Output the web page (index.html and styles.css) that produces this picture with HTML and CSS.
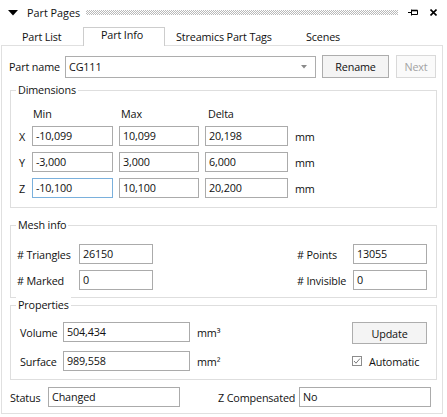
FILE: index.html
```html
<!DOCTYPE html>
<html>
<head>
<meta charset="utf-8">
<link rel="stylesheet" href="styles.css">
</head>
<body>
<div class="dock">
  <div class="titlebar">
    <svg class="tri" width="10" height="6" viewBox="0 0 10 6"><polygon points="0,0 10,0 5,5.5" fill="#000"/></svg>
    <span class="title">Part Pages</span>
    <span class="dots"></span>
    <svg class="pin" width="10" height="7" viewBox="0 0 10 7"><path d="M0 3.5H3.5M3.5 0.5V6.5M4 1.5H9.5V5.5H4" fill="none" stroke="#000" stroke-width="1"/><path d="M4 1.5H9.5" stroke="#000" stroke-width="1.6"/></svg>
    <svg class="close" width="7" height="7" viewBox="0 0 7 7"><path d="M0.5 0.5L6.5 6.5M6.5 0.5L0.5 6.5" stroke="#000" stroke-width="1.6"/></svg>
  </div>
  <div class="tabs">
    <div class="tab t1">Part List</div>
    <div class="tab sel">Part Info</div>
    <div class="tab t3">Streamics Part Tags</div>
    <div class="tab t4">Scenes</div>
  </div>
  <div class="pane">
    <div class="namerow">
      <span class="namelbl">Part name</span>
      <div class="combo"><span>CG111</span><svg class="arrow" width="6" height="4" viewBox="0 0 6 4"><polygon points="0,0 6,0 3,3.5" fill="#8a8a8a"/></svg></div>
      <div class="btn rename">Rename</div>
      <div class="btn next">Next</div>
    </div>

    <div class="group dims">
      <span class="gtitle">Dimensions</span>
      <div class="drow head">
        <span class="axis"></span>
        <span class="cmin hd">Min</span>
        <span class="cmax hd">Max</span>
        <span class="cdel hd">Delta</span>
      </div>
      <div class="drow">
        <span class="axis">X</span>
        <div class="edit cmin">-10,099</div>
        <div class="edit cmax">10,099</div>
        <div class="edit cdel">20,198</div>
        <span class="unit">mm</span>
      </div>
      <div class="drow">
        <span class="axis">Y</span>
        <div class="edit cmin">-3,000</div>
        <div class="edit cmax">3,000</div>
        <div class="edit cdel">6,000</div>
        <span class="unit">mm</span>
      </div>
      <div class="drow">
        <span class="axis">Z</span>
        <div class="edit cmin focus">-10,100</div>
        <div class="edit cmax">10,100</div>
        <div class="edit cdel">20,200</div>
        <span class="unit">mm</span>
      </div>
    </div>

    <div class="group mesh">
      <span class="gtitle">Mesh info</span>
      <div class="mrow">
        <div class="mcell"><span class="mlbl">#&nbsp;Triangles</span><div class="edit mval">26150</div></div>
        <div class="mcell"><span class="mlbl r">#&nbsp;Points</span><div class="edit mval">13055</div></div>
      </div>
      <div class="mrow">
        <div class="mcell"><span class="mlbl">#&nbsp;Marked</span><div class="edit mval">0</div></div>
        <div class="mcell"><span class="mlbl r">#&nbsp;Invisible</span><div class="edit mval">0</div></div>
      </div>
    </div>

    <div class="group props">
      <span class="gtitle">Properties</span>
      <div class="pbody">
        <div class="pleft">
          <div class="prow"><span class="plbl">Volume</span><div class="edit pval">504,434</div><span class="punit">mm³</span></div>
          <div class="prow"><span class="plbl">Surface</span><div class="edit pval">989,558</div><span class="punit">mm²</span></div>
        </div>
        <div class="pright">
          <div class="btn update">Update</div>
          <div class="check">
            <svg class="box" width="10" height="10" viewBox="0 0 10 10"><rect x="0.5" y="0.5" width="9" height="9" fill="#fff" stroke="#8c8c8c"/><path d="M2 5L4 7.2L8 2.5" fill="none" stroke="#7a7a7a" stroke-width="1"/></svg>
            <span>Automatic</span>
          </div>
        </div>
      </div>
    </div>

    <div class="statusrow">
      <span class="slbl">Status</span>
      <div class="edit sval">Changed</div>
      <span class="zlbl">Z Compensated</span>
      <div class="edit sval">No</div>
    </div>
  </div>
</div>
</body>
</html>
```

FILE: styles.css
```css
html, body {
  margin: 0;
  padding: 0;
  background: #fff;
}
body {
  width: 447px;
  height: 417px;
  overflow: hidden;
  font-family: "Open Sans", "Noto Sans", sans-serif;
  font-size: 10.8px;
  letter-spacing: -0.15px;
  color: #111;
}
.dock {
  width: 447px;
}
.titlebar {
  display: flex;
  align-items: center;
  height: 25px;
  padding-left: 8px;
  padding-right: 10px;
  box-sizing: border-box;
}
.tri {
  flex: none;
  margin-right: 9px;
  margin-top: 1px;
}
.title {
  line-height: 16px;
  white-space: nowrap;
  letter-spacing: 0;
}
.dots {
  flex: 1;
  height: 5px;
  margin-left: 6px;
  margin-right: 10px;
  background: repeating-conic-gradient(#b9b9b9 0 25%, transparent 0 50%) 0 0 / 2px 2px;
}
.pin {
  flex: none;
  margin-right: 12px;
}
.close {
  flex: none;
}

.tabs {
  display: flex;
  align-items: flex-end;
  height: 18px;
  margin-top: 2px;
  padding-left: 3px;
}
.tab {
  height: 16px;
  line-height: 16px;
  white-space: nowrap;
  box-sizing: border-box;
}
.t1 {
  width: 80px;
  padding-left: 19px;
}
.sel {
  position: relative;
  z-index: 1;
  width: 82px;
  height: 19px;
  margin-bottom: -1px;
  padding-left: 17px;
  line-height: 14px;
  background: #fff;
  border: 1px solid #cdcdcd;
  border-bottom: 0;
}
.t3 {
  width: 124px;
  padding-left: 11px;
}
.t4 {
  padding-left: 17px;
}

.pane {
  margin: 0 4px 0 1px;
  border: 1px solid #e0e0e0;
  padding: 9px 5px 6px 7px;
}

.namerow {
  display: flex;
  align-items: center;
  height: 23px;
}
.namelbl {
  width: 56px;
  flex: none;
}
.combo {
  width: 251px;
  height: 22px;
  box-sizing: border-box;
  border: 1px solid #adadad;
  display: flex;
  align-items: center;
  justify-content: space-between;
  padding: 0 8px 0 3px;
  margin-right: 6px;
}
.arrow {
  flex: none;
}
.btn {
  height: 23px;
  box-sizing: border-box;
  border: 1px solid #adadad;
  background: #f4f4f4;
  display: flex;
  align-items: center;
  justify-content: center;
}
.rename {
  width: 67px;
  margin-right: 7px;
}
.next {
  width: 40px;
  color: #a3a3a3;
  border-color: #d9d9d9;
  background: #fafafa;
}

.edit {
  height: 20px;
  box-sizing: border-box;
  border: 1px solid #ababab;
  background: #fff;
  padding-left: 3px;
  line-height: 18px;
  white-space: nowrap;
}
.edit.focus {
  border-color: #7ab0dc;
}

.group {
  position: relative;
  border: 1px solid #dedede;
  margin-left: 1px;
}
.gtitle {
  position: absolute;
  top: -9px;
  left: 5px;
  padding: 0 2px;
  line-height: 16px;
  background: #fff;
}

.dims {
  margin-top: 12px;
  padding: 14px 0 9px 8px;
}
.drow {
  display: flex;
  align-items: center;
  height: 20px;
  margin-bottom: 6px;
}
.drow:last-child {
  margin-bottom: 0;
}
.drow.head {
  height: 16px;
  margin-bottom: 5px;
}
.hd {
  padding-left: 1px;
}
.axis {
  width: 13px;
  flex: none;
}
.cmin {
  width: 81px;
  margin-right: 6px;
  flex: none;
}
.cmax {
  width: 80px;
  margin-right: 6px;
  flex: none;
}
.cdel {
  width: 83px;
  margin-right: 7px;
  flex: none;
}

.mesh {
  margin-top: 17px;
  padding: 18px 9px 7px 6px;
}
.mrow {
  display: flex;
  justify-content: space-between;
  height: 20px;
  margin-bottom: 6px;
}
.mrow:last-child {
  margin-bottom: 0;
}
.mcell {
  display: flex;
  align-items: center;
}
.mlbl {
  width: 62px;
  flex: none;
}
.mlbl.r {
  width: 56px;
}
.mval {
  width: 74px;
}

.props {
  margin-top: 7px;
  padding: 16px 9px 8px 9px;
}
.pbody {
  display: flex;
  justify-content: space-between;
}
.prow {
  display: flex;
  align-items: center;
  height: 20px;
  margin-bottom: 9px;
}
.prow:last-child {
  margin-bottom: 0;
}
.plbl {
  width: 43px;
  flex: none;
}
.pval {
  width: 127px;
  margin-right: 7px;
}
.pright {
  width: 75px;
}
.update {
  width: 75px;
  height: 22px;
}
.check {
  display: flex;
  align-items: center;
  margin-top: 10px;
  height: 14px;
}
.box {
  flex: none;
  margin-right: 7px;
}

.statusrow {
  display: flex;
  align-items: center;
  margin-top: 7px;
  padding-left: 1px;
  height: 20px;
}
.slbl {
  width: 38px;
  flex: none;
}
.sval {
  width: 132px;
}
.zlbl {
  margin-left: 38px;
  width: 81px;
  flex: none;
  white-space: nowrap;
}
```
